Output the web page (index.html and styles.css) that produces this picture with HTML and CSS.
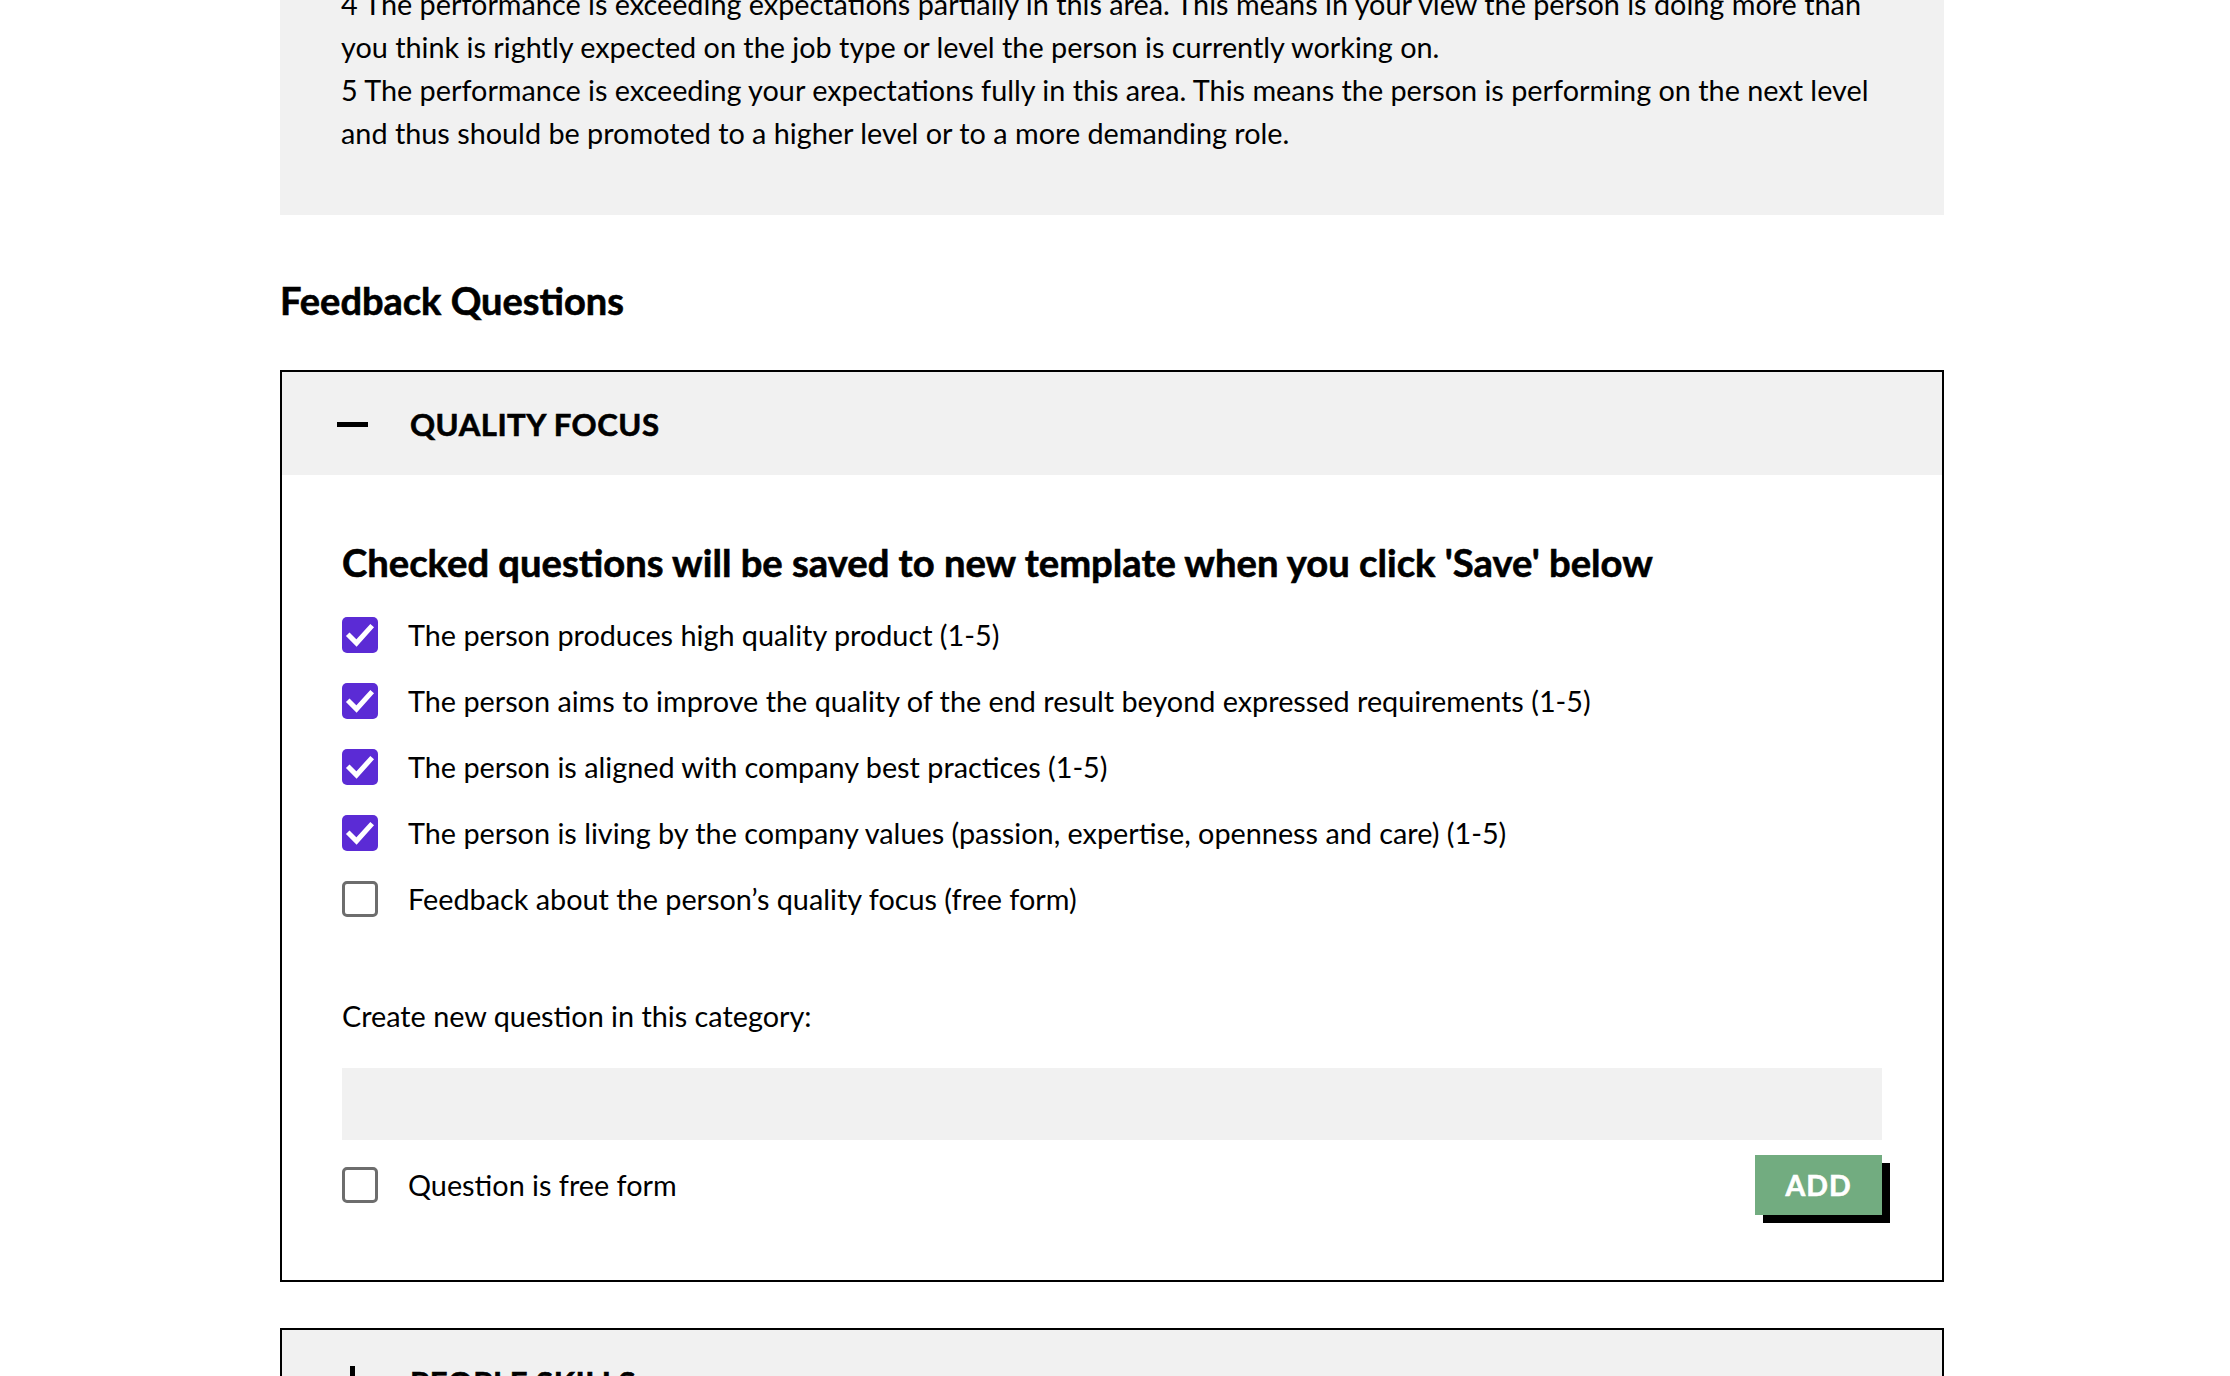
FILE: index.html
```html
<!DOCTYPE html>
<html lang="en">
<head>
<meta charset="utf-8">
<title>Feedback Questions</title>
<link rel="stylesheet" href="styles.css">
</head>
<body>
<main class="page">
  <section class="info">
    <p>4 The performance is exceeding expectations partially in this area. This means in your view the person is doing more than you think is rightly expected on the job type or level the person is currently working on.</p>
    <p>5 The performance is exceeding your expectations fully in this area. This means the person is performing on the next level and thus should be promoted to a higher level or to a more demanding role.</p>
  </section>

  <h2 class="section-title">Feedback Questions</h2>

  <section class="category">
    <header class="category-head">
      <span class="toggle minus"></span>
      <h3 class="category-title">QUALITY FOCUS</h3>
    </header>
    <div class="category-body">
      <h4 class="body-title">Checked questions will be saved to new template when you click 'Save' below</h4>
      <ul class="questions">
        <li class="question"><span class="box checked"><svg viewBox="0 0 36 36" width="36" height="36"><path d="M7.5 19 L14.5 26 L28.5 10.5" fill="none" stroke="#fff" stroke-width="5" stroke-linecap="square" stroke-linejoin="miter"/></svg></span><span class="q-text">The person produces high quality product (1-5)</span></li>
        <li class="question"><span class="box checked"><svg viewBox="0 0 36 36" width="36" height="36"><path d="M7.5 19 L14.5 26 L28.5 10.5" fill="none" stroke="#fff" stroke-width="5" stroke-linecap="square" stroke-linejoin="miter"/></svg></span><span class="q-text">The person aims to improve the quality of the end result beyond expressed requirements (1-5)</span></li>
        <li class="question"><span class="box checked"><svg viewBox="0 0 36 36" width="36" height="36"><path d="M7.5 19 L14.5 26 L28.5 10.5" fill="none" stroke="#fff" stroke-width="5" stroke-linecap="square" stroke-linejoin="miter"/></svg></span><span class="q-text">The person is aligned with company best practices (1-5)</span></li>
        <li class="question"><span class="box checked"><svg viewBox="0 0 36 36" width="36" height="36"><path d="M7.5 19 L14.5 26 L28.5 10.5" fill="none" stroke="#fff" stroke-width="5" stroke-linecap="square" stroke-linejoin="miter"/></svg></span><span class="q-text">The person is living by the company values (passion, expertise, openness and care) (1-5)</span></li>
        <li class="question"><span class="box"></span><span class="q-text">Feedback about the person’s quality focus (free form)</span></li>
      </ul>
      <label class="new-label">Create new question in this category:</label>
      <div class="new-input"></div>
      <div class="new-row">
        <div class="question"><span class="box"></span><span class="q-text">Question is free form</span></div>
        <button class="add-btn">ADD</button>
      </div>
    </div>
  </section>

  <section class="category">
    <header class="category-head">
      <span class="toggle plus"></span>
      <h3 class="category-title">PEOPLE SKILLS</h3>
    </header>
    <div class="category-body collapsed"></div>
  </section>
</main>
</body>
</html>
```

FILE: styles.css
```css
* { box-sizing: border-box; }
html, body { margin: 0; padding: 0; background: #fff; }
body {
  font-family: Lato, "Open Sans", "Liberation Sans", sans-serif;
  color: #000;
  overflow: hidden;
}
.page {
  width: 1664px;
  margin: -57px 0 0 280px;
}
.info {
  background: #f1f1f1;
  padding: 40px 60px 60px 61px;
  font-size: 28.8px;
  line-height: 43px;
}
.info p { margin: 0; }
.section-title {
  margin: 63px 0 48px;
  font-size: 38px;
  line-height: 44px;
  font-weight: 700;
  -webkit-text-stroke: 0.6px #000;
}
.category {
  border: 2px solid #000;
  margin-bottom: 46px;
}
.category-head {
  background: #f1f1f1;
  height: 103px;
  display: flex;
  align-items: center;
  padding-left: 55px;
  gap: 42px;
}
.toggle {
  position: relative;
  width: 31px;
  height: 31px;
  flex: none;
}
.toggle::before {
  content: "";
  position: absolute;
  left: 0; right: 0; top: 14px;
  height: 5px;
  background: #000;
}
.plus::after {
  content: "";
  position: absolute;
  top: 0; bottom: 0; left: 13px;
  width: 5px;
  background: #000;
}
.category-title {
  margin: 0;
  font-size: 31.1px;
  font-weight: 700;
  letter-spacing: 0.5px;
  -webkit-text-stroke: 0.6px #000;
}
.category-body {
  padding: 65px 60px 65px 60px;
}
.category-body.collapsed { height: 300px; }
.body-title {
  margin: 0 0 33px;
  font-size: 38.2px;
  line-height: 44px;
  font-weight: 700;
  -webkit-text-stroke: 0.6px #000;
}
.questions {
  list-style: none;
  margin: 0;
  padding: 0;
  display: flex;
  flex-direction: column;
  gap: 30px;
}
.question {
  display: flex;
  align-items: center;
  gap: 30px;
  height: 36px;
  font-size: 28.8px;
}
.box {
  width: 36px;
  height: 36px;
  flex: none;
  border: 3px solid #6d6d6d;
  border-radius: 5px;
  background: #fff;
  display: flex;
}
.box.checked {
  border: none;
  background: #5b2bd5;
}
.new-label {
  display: block;
  margin-top: 78px;
  font-size: 28.8px;
  line-height: 43px;
}
.new-input {
  margin-top: 30px;
  height: 72px;
  background: #f1f1f1;
}
.new-row {
  margin-top: 15px;
  display: flex;
  align-items: center;
  justify-content: space-between;
}
.add-btn {
  width: 127px;
  height: 60px;
  border: none;
  background: #72ac80;
  color: #fff;
  font-family: inherit;
  font-size: 28.5px;
  font-weight: 700;
  letter-spacing: 1px;
  -webkit-text-stroke: 0.6px #fff;
  box-shadow: 8px 8px 0 #000;
  padding: 0;
}
```
